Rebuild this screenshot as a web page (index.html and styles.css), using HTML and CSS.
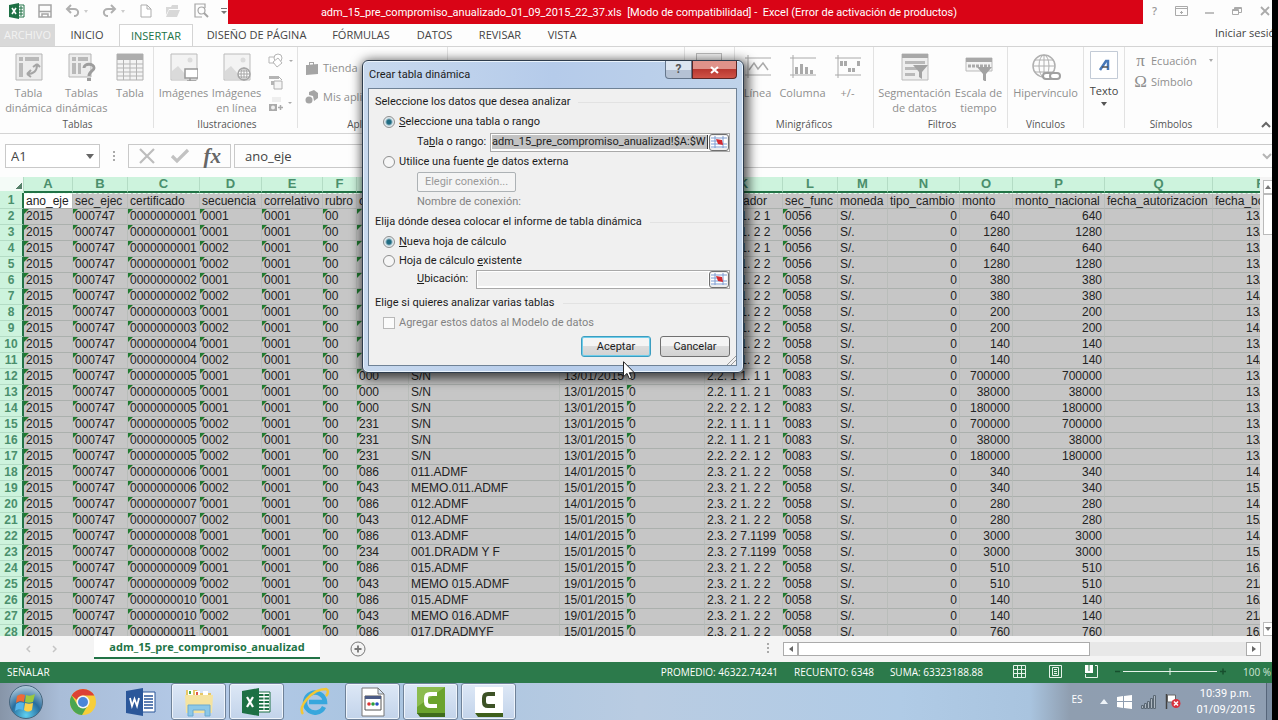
FILE: index.html
```html
<!DOCTYPE html>
<html lang="es">
<head>
<meta charset="utf-8">
<title>Excel - Crear tabla dinámica</title>
<link rel="stylesheet" href="styles.css">
</head>
<body>
<div class="screen">
  <header class="titlebar">
    <div class="quick">
      <svg class="q-xl" width="16" height="16" viewBox="0 0 16 16"><path d="M9 2h6v12H9z" fill="#fff" stroke="#217346"/><path d="M10 5h4M10 8h4M10 11h4M12 3v10" stroke="#217346"/><path d="M0 2l10-2v16L0 14z" fill="#1d7044"/><path d="M3 5l4 6M7 5l-4 6" stroke="#fff" stroke-width="1.6"/></svg>
      <svg class="q-save" width="14" height="14" viewBox="0 0 14 14" fill="none" stroke="#a5a5a5" stroke-width="1.5"><path d="M1 1h12v12H1zM1 7.500h12M4 13v-3h6v3"/></svg>
      <svg class="q-undo" width="24" height="14" viewBox="0 0 24 14"><path d="M2 5h7c6 0 5 7 0 7M6 1L2 5l4 4" fill="none" stroke="#b0b0b0" stroke-width="2"/><path d="M19 6h4l-2 3z" fill="#ccc"/></svg>
      <svg class="q-redo" width="24" height="14" viewBox="0 0 24 14"><path d="M13 5H6c-6 0-5 7 0 7M9 1l4 4-4 4" fill="none" stroke="#b0b0b0" stroke-width="2"/><path d="M19 6h4l-2 3z" fill="#ccc"/></svg>
      <svg class="q-new" width="12" height="14" viewBox="0 0 12 14" fill="#fff" stroke="#adadad"><path d="M1 1h6l4 4v8H1zM7 1v4h4"/></svg>
      <svg class="q-open" width="15" height="14" viewBox="0 0 15 14" fill="#d8d8d8"><path d="M1 3h5l1-2h6v4H4l-3 6zM4 6h11l-3 7H1z"/></svg>
      <svg class="q-view" width="15" height="15" viewBox="0 0 15 15" fill="none" stroke="#a5a5a5" stroke-width="1.2"><path d="M8 14H1V1h10v4"/><circle cx="7.500" cy="7.500" r="3.500"/><path d="M10 10l4 4" stroke-width="2"/></svg>
      <svg class="q-more" width="6" height="8" viewBox="0 0 6 8" fill="#777"><path d="M0 1h6v1H0zM0 4h6L3 7z"/></svg>
    </div>
    <h1 class="doc-title">adm_15_pre_compromiso_anualizado_01_09_2015_22_37.xls&nbsp; [Modo de compatibilidad] -&nbsp; Excel (Error de activación de productos)</h1>
    <div class="win-controls">
      <span>?</span>
      <svg width="13" height="10" viewBox="0 0 13 10" fill="none" stroke="#aaa"><path d="M.5.5h12v9H.5zM.5 2.500h12M5 6.500h3M6.500 5v3"/></svg>
      <svg width="10" height="10" viewBox="0 0 10 10" stroke="#aaa" stroke-width="1.500"><path d="M0 7h9"/></svg>
      <svg width="10" height="10" viewBox="0 0 10 10" fill="none" stroke="#aaa"><path d="M.5 3.500h6v5h-6zM2.500 3.500v-2h7v5h-3M1 4.500h5M3 2.500h6"/></svg>
      <svg width="10" height="10" viewBox="0 0 10 10" stroke="#aaa" stroke-width="1.800"><path d="M1 1l8 8M9 1L1 9"/></svg>
    </div>
  </header>

  <nav class="tabs">
    <button class="tab tab-file">ARCHIVO</button>
    <button class="tab t-home">INICIO</button>
    <button class="tab tab-active">INSERTAR</button>
    <button class="tab t-page">DISEÑO DE PÁGINA</button>
    <button class="tab t-form">FÓRMULAS</button>
    <button class="tab t-data">DATOS</button>
    <button class="tab t-rev">REVISAR</button>
    <button class="tab t-view">VISTA</button>
    <a class="sign-in" href="#">Iniciar sesión</a>
  </nav>

  <section class="ribbon">
    <div class="group g-tables">
      <div class="tools">
        <button class="tool w53"><svg width="28" height="28" viewBox="0 0 28 28"><path d="M1 1h26v26H1z" fill="#ececec" stroke="#b5b5b5"/><path d="M4 4h4v4H4zM10 4h14v4H10zM4 10h4v14H4z" fill="#b9b9b9"/><path d="M12 21c6 0 10-3 10-9M12 21l4-4M12 21l4 3M22 11l-4 3M22 11l3 3" fill="none" stroke="#a5a5a5" stroke-width="2"/></svg><span>Tabla<br>dinámica</span></button>
        <button class="tool w53"><svg width="28" height="28" viewBox="0 0 28 28"><path d="M1 1h22v23H1z" fill="#ececec" stroke="#b5b5b5"/><path d="M4 4h4v4H4zM10 4h10v4H10zM4 10h4v11H4zM10 10h3v11h-3z" fill="#b9b9b9"/><path d="M16 15c0-5 10-5 10 0 0 3-5 3-5 8" fill="none" stroke="#9d9d9d" stroke-width="3"/><path d="M19 25h4v3h-4z" fill="#9d9d9d"/></svg><span>Tablas<br>dinámicas</span></button>
        <button class="tool w44"><svg width="28" height="28" viewBox="0 0 28 28"><path d="M1 1h26v26H1z" fill="#f4f4f4" stroke="#b0b0b0"/><path d="M1 1h26v6H1z" fill="#adadad"/><path d="M1 11h26M1 15h26M1 19h26M1 23h26M7.500 7v20M14 7v20M20.500 7v20" stroke="#b5b5b5"/></svg><span>Tabla</span></button>
      </div>
      <h2>Tablas</h2>
    </div>
    <div class="group g-ill">
      <div class="tools">
        <button class="tool w53"><svg width="28" height="28" viewBox="0 0 28 28"><path d="M1 1h26v26H1z" fill="#f3f3f3" stroke="#bbb"/><path d="M2 26V18l6-5 8 9v4z" fill="#dadada"/><circle cx="20" cy="7" r="2.500" fill="#dcdcdc"/><path d="M15 16h13v9H15zM20 25v3M17 28h9" fill="#fff" stroke="#999" stroke-width="1.500"/></svg><span>Imágenes</span></button>
        <button class="tool w53"><svg width="28" height="28" viewBox="0 0 28 28"><path d="M1 1h26v26H1z" fill="#f3f3f3" stroke="#bbb"/><path d="M2 26V18l6-5 8 9v4z" fill="#dadada"/><circle cx="20" cy="7" r="2.500" fill="#dcdcdc"/><circle cx="21" cy="21" r="6" fill="#fff" stroke="#a5a5a5" stroke-width="1.500"/><path d="M21 15v12M15 21h12M16 18h10M16 24h10" stroke="#a5a5a5"/><ellipse cx="21" cy="21" rx="3" ry="6" fill="none" stroke="#a5a5a5"/></svg><span>Imágenes<br>en línea</span></button>
        <div class="small-icons">
          <svg width="26" height="15" viewBox="0 0 26 15" fill="#fff" stroke="#b5b5b5"><path d="M1 4h8v6H1z"/><circle cx="10" cy="5" r="4"/><path d="M10 5l4 5-5 4-4-5z"/><path d="M21 7h4l-2 2z" fill="#aaa" stroke="none"/></svg>
          <svg width="26" height="15" viewBox="0 0 26 15"><path d="M1 1h10v3H1zM3 6h3v4H3z" fill="#b5b5b5"/><path d="M6 6h8v8H6z" fill="#f5f5f5" stroke="#b0b0b0"/><path d="M11 2l3 3" stroke="#b0b0b0"/></svg>
          <svg width="26" height="15" viewBox="0 0 26 15"><path d="M4 0h9v5H4z" fill="#eee"/><path d="M1 7h8v7H1z" fill="#aaa"/><circle cx="5" cy="10.500" r="2" fill="#eee"/><path d="M10 10.500h5M12.500 8v5" stroke="#aaa" stroke-width="1.500"/><path d="M20 5h4l-2 2z" fill="#aaa"/></svg>
        </div>
      </div>
      <h2>Ilustraciones</h2>
    </div>
    <div class="group g-apps">
      <div class="line-tools">
        <button class="line-tool"><svg width="14" height="14" viewBox="0 0 14 14" fill="#a5a5a5"><path d="M1 4l12-1v10L1 14zM4 4V1h5v3H8V2H5v2z"/></svg>Tienda</button>
        <button class="line-tool"><svg width="14" height="14" viewBox="0 0 14 14" fill="#a5a5a5"><path d="M4 2l5-2 4 3v5l-4 3-1-5-4-1z"/><circle cx="4" cy="10" r="3.500"/></svg>Mis aplicaciones</button>
      </div>
      <h2>Aplicaciones</h2>
    </div>
    <div class="group g-charts"></div>
    <div class="group g-pivot"><span class="chart-box"></span></div>
    <div class="group g-spark">
      <div class="tools">
        <button class="tool w45"><svg width="28" height="28" viewBox="0 0 28 28" fill="none" stroke="#aaa"><path d="M1 5h26M1 22h26M4 2v23"/><path d="M5 17l5-7 4 6 5-6 5 7" stroke-width="1.500"/></svg><span>Línea</span></button>
        <button class="tool w45"><svg width="28" height="28" viewBox="0 0 28 28"><path d="M1 5h26M1 22h26M4 2v23" stroke="#aaa"/><path d="M6 14h3v7H6zM11 11h3v10h-3zM16 14h3v7h-3zM21 17h3v4h-3z" fill="#aaa"/></svg><span>Columna</span></button>
        <button class="tool w45"><svg width="28" height="28" viewBox="0 0 28 28"><path d="M1 5h26M1 22h26M4 2v23" stroke="#aaa"/><path d="M6 8h3v5H6zM10 8h3v5h-3zM14 15h3v4h-3zM18 15h3v4h-3zM23 8h3v5h-3z" fill="#aaa"/></svg><span>+/-</span></button>
      </div>
      <h2>Minigráficos</h2>
    </div>
    <div class="group g-filter">
      <div class="tools">
        <button class="tool w72"><svg width="28" height="28" viewBox="0 0 28 28"><path d="M1 1h26v26H1z" fill="#eee" stroke="#bbb"/><path d="M1 1h26v4H1z" fill="#a8a8a8"/><path d="M4 8h20v3H4zM4 14h12v3H4zM4 20h10v3H4z" fill="#b9b9b9"/><path d="M12 12h15l-6 7v7l-3-2v-5z" fill="#a3a3a3"/></svg><span>Segmentación<br>de datos</span></button>
        <button class="tool w53"><svg width="28" height="28" viewBox="0 0 28 28"><path d="M1 5h26v13H1z" fill="#f4f4f4" stroke="#bbb"/><path d="M1 5h26v4H1z" fill="#a8a8a8"/><path d="M3 13h22" stroke="#aaa" stroke-width="3" stroke-dasharray="3 1"/><path d="M12 14h15l-6 7v8l-3-2v-6z" fill="#a3a3a3"/></svg><span>Escala de<br>tiempo</span></button>
      </div>
      <h2>Filtros</h2>
    </div>
    <div class="group g-link">
      <div class="tools">
        <button class="tool w72"><svg width="30" height="28" viewBox="0 0 30 28" fill="none" stroke="#b0b0b0"><circle cx="13" cy="13" r="11" stroke-width="1.500"/><ellipse cx="13" cy="13" rx="5" ry="11"/><path d="M13 2v22M2 13h22M4 7h18M4 19h18"/><g stroke="#a0a0a0" stroke-width="2" fill="#fff"><rect x="12" y="20" width="10" height="6" rx="3"/><rect x="19" y="20" width="10" height="6" rx="3"/></g></svg><span>Hipervínculo</span></button>
      </div>
      <h2>Vínculos</h2>
    </div>
    <div class="group g-text">
      <button class="tool tool-on"><svg width="28" height="28" viewBox="0 0 28 28"><path d="M.5.5h27v27H.5z" fill="#fff" stroke="#c3cbd6"/><path d="M10 19l6-9h2v9" fill="none" stroke="#4677b8" stroke-width="2.500"/><path d="M12 16h6" stroke="#555" stroke-width="1.500"/></svg><span>Texto</span><svg width="6" height="4" viewBox="0 0 6 4"><path d="M0 0h6L3 4z" fill="#555"/></svg></button>
    </div>
    <div class="group g-sym">
      <div class="sym-tools">
        <button class="line-tool"><i class="glyph">π</i>Ecuación<svg class="drop" width="4" height="3" viewBox="0 0 4 3"><path d="M0 0h4L2 3z" fill="#aaa"/></svg></button>
        <button class="line-tool"><i class="glyph">Ω</i>Símbolo</button>
      </div>
      <h2>Símbolos</h2>
    </div>
    <svg class="collapse" width="10" height="8" viewBox="0 0 10 8" fill="none" stroke="#666" stroke-width="2"><path d="M1 6l4-4 4 4"/></svg>
  </section>

  <section class="formula-bar">
    <div class="name-box"><input type="text" value="A1" aria-label="Cuadro de nombres"><svg width="8" height="5" viewBox="0 0 8 5"><path d="M0 0h8L4 5z" fill="#666"/></svg></div>
    <span class="grip"></span>
    <div class="fx-box">
      <svg width="18" height="16" viewBox="0 0 18 16" stroke="#bdbdbd" stroke-width="2.200"><path d="M2 1l14 14M16 1L2 15"/></svg>
      <svg width="20" height="16" viewBox="0 0 20 16" fill="none" stroke="#c2c2c2" stroke-width="3.200"><path d="M2 8l5 5L18 2"/></svg>
      <i class="fx">fx</i>
    </div>
    <div class="formula"><input type="text" value="ano_eje" aria-label="Barra de fórmulas"><svg width="10" height="7" viewBox="0 0 10 7" fill="none" stroke="#b5b5b5" stroke-width="2"><path d="M1 1l4 4 4-4"/></svg></div>
  </section>

  <main class="sheet">
    <div class="grid-view">
      <table class="cells">
        <colgroup><col class="c-hd"><col class="c-a"><col class="c-b"><col class="c-c"><col class="c-d"><col class="c-e"><col class="c-f"><col class="c-g"><col class="c-h"><col class="c-i"><col class="c-j"><col class="c-k"><col class="c-l"><col class="c-m"><col class="c-n"><col class="c-o"><col class="c-p"><col class="c-q"><col class="c-r"></colgroup>
        <thead id="letters"></thead>
        <tbody id="rows"></tbody>
      </table>
    </div>
    <div class="v-scroll">
      <button class="v-btn" aria-label="Subir"><svg width="6" height="4" viewBox="0 0 6 4"><path d="M0 4h6L3 0z" fill="#777"/></svg></button>
      <div class="v-thumb"></div>
      <button class="v-btn v-down" aria-label="Bajar"><svg width="6" height="4" viewBox="0 0 6 4"><path d="M0 0h6L3 4z" fill="#777"/></svg></button>
    </div>
  </main>

  <section class="sheet-tabs">
    <div class="nav-arrows"><svg width="5" height="8" viewBox="0 0 5 8"><path d="M4 1L1 4l3 3" fill="none" stroke="#c5c5c5" stroke-width="1.500"/></svg><svg width="5" height="8" viewBox="0 0 5 8"><path d="M1 1l3 3-3 3" fill="none" stroke="#c5c5c5" stroke-width="1.500"/></svg></div>
    <button class="sheet-tab">adm_15_pre_compromiso_anualizad</button>
    <button class="add-sheet" aria-label="Hoja nueva"><svg width="16" height="16" viewBox="0 0 16 16" fill="none" stroke="#777"><circle cx="8" cy="8" r="7"/><path d="M8 4.500v7M4.500 8h7" stroke-width="1.800"/></svg></button>
    <span class="grip tab-grip"></span>
    <div class="h-scroll">
      <button class="h-btn" aria-label="Izquierda"><svg width="4" height="6" viewBox="0 0 4 6"><path d="M4 0v6L0 3z" fill="#666"/></svg></button>
      <div class="h-thumb"></div>
      <button class="h-btn h-right" aria-label="Derecha"><svg width="4" height="6" viewBox="0 0 4 6"><path d="M0 0v6l4-3z" fill="#666"/></svg></button>
    </div>
  </section>

  <footer class="status">
    <span class="mode">SEÑALAR</span>
    <span>PROMEDIO: 46322.74241</span>
    <span>RECUENTO: 6348</span>
    <span>SUMA: 63323188.88</span>
    <div class="views">
      <svg width="13" height="13" viewBox="0 0 13 13" fill="none" stroke="#e6f3ea"><path d="M.5.5h12v12H.5zM.5 4.500h12M.5 8.500h12M4.500.5v12M8.500.5v12"/></svg>
      <svg width="13" height="13" viewBox="0 0 13 13" fill="none" stroke="#e6f3ea"><path d="M.5.5h12v12H.5zM3.500 2.500h6v8h-6zM5 4.500h3M5 6.500h3M5 8.500h3"/></svg>
      <svg width="13" height="13" viewBox="0 0 13 13"><path d="M0 0h8v8H0z" fill="#fff"/><path d="M4 0v6" stroke="#2c7a4b"/><path d="M10 .5h2.500v12H.5V9" fill="none" stroke="#e6f3ea"/></svg>
    </div>
    <svg class="zoom" width="112" height="9" viewBox="0 0 112 9"><path d="M0 4.500h5M105 4.500h6M108 1.500v6" stroke="#174f2e" stroke-width="1.500"/><path d="M8 4.500h94M55 1v7" stroke="#e6f3ea"/></svg>
    <span class="pct">100 %</span>
  </footer>

  <footer class="taskbar">
    <button class="task start" aria-label="Inicio"><svg width="36" height="36" viewBox="0 0 36 36"><defs><radialGradient id="orb" cx=".5" cy=".9" r=".9"><stop offset="0" stop-color="#5fd0f0"/><stop offset=".5" stop-color="#276d9e"/><stop offset="1" stop-color="#b8cede"/></radialGradient></defs><circle cx="18" cy="18" r="16.500" fill="url(#orb)" stroke="#47667e"/><path d="M9 12c3-2 5-2 8-1l-1 7c-3-1-5-1-8 1z" fill="#ee6a35"/><path d="M18 11c3 1 5 1 9-1l-2 8c-3 1-5 1-8 0z" fill="#9bc93f"/><path d="M8 20c3-2 5-2 8-1l-1 7c-3-1-5-1-8 1z" fill="#56b4ea"/><path d="M17 19c3 1 5 1 8 0l-1 7c-3 2-5 2-8 0z" fill="#fbd04a"/></svg></button>
    <button class="task" aria-label="Chrome"><svg width="28" height="28" viewBox="0 0 28 28"><circle cx="14" cy="14" r="13" fill="#f6ce3a"/><path d="M2.700 7.500A13 13 0 0 1 25.300 7.500H14a6.500 6.500 0 0 0-6 4.500z" fill="#dc4136"/><path d="M2.700 7.500A13 13 0 0 0 13 27l5-8.500a6.500 6.500 0 0 1-9.500-1.500z" fill="#4ba551"/><circle cx="14" cy="14" r="6.500" fill="#f7f7f7"/><circle cx="14" cy="14" r="5" fill="#4a86d8"/></svg></button>
    <button class="task" aria-label="Word"><svg width="30" height="28" viewBox="0 0 30 28"><path d="M15 4h14v20H15z" fill="#fff" stroke="#2b579a"/><path d="M18 8h9M18 11h9M18 14h9M18 17h9M18 20h9" stroke="#2b579a" stroke-width="1.500"/><path d="M0 3l17-3v28L0 25z" fill="#2b579a"/><path d="M4 10l2 8 2.500-7 2.500 7 2-8" fill="none" stroke="#fff" stroke-width="1.800"/></svg></button>
    <button class="task open" aria-label="Explorador"><svg width="32" height="30" viewBox="0 0 32 30"><path d="M3 3h11l2 3h12v20H3z" fill="#e6c765"/><path d="M5 3h5v5H5zM12 4h5v5h-5zM20 4h5v5h-5z" fill="#fff"/><path d="M6 4h2v3H6z" fill="#4caf50"/><path d="M13 5h2v3h-2z" fill="#e05b4b"/><path d="M2 8h28l-1 18H3z" fill="#f5e3a0"/><path d="M5 29V18h22v11h-5v-6H10v6z" fill="#8cc8e8" stroke="#6aa9d0"/></svg></button>
    <button class="task open" aria-label="Excel"><svg width="30" height="28" viewBox="0 0 30 28"><path d="M15 4h13v20H15z" fill="#fff" stroke="#1d7044"/><path d="M17 7h10M17 10.500h10M17 14h10M17 17.500h10M17 21h10" stroke="#1d7044" stroke-width="2"/><path d="M22 5v18" stroke="#fff"/><path d="M0 3l17-3v28L0 25z" fill="#1d7044"/><path d="M5 9l6 10M11 9L5 19" stroke="#fff" stroke-width="2.200"/></svg></button>
    <button class="task" aria-label="Internet Explorer"><svg width="30" height="30" viewBox="0 0 30 30"><path d="M24 20a10 10 0 1 1 1-5H9" fill="none" stroke="#37a7dd" stroke-width="4.500"/><path d="M3 27C-3 20 12 2 26 2c3 1 2 5 0 7" fill="none" stroke="#f3c736" stroke-width="2.500"/></svg></button>
    <button class="task open" aria-label="Aplicación"><svg width="24" height="30" viewBox="0 0 24 30"><path d="M1 1h16l6 6v22H1zM17 1v6h6" fill="#fff" stroke="#777"/><path d="M4 9h16v14H4z" fill="#fff" stroke="#555"/><path d="M4 9h16v3H4z" fill="#4a5a86"/><circle cx="8" cy="17" r="1.800" fill="#d33"/><circle cx="12" cy="17" r="1.800" fill="#2a9d3a"/><circle cx="16" cy="17" r="1.800" fill="#274fc2"/></svg></button>
    <button class="task open" aria-label="Camtasia"><svg width="30" height="30" viewBox="0 0 30 30"><path d="M1 0h28v27H1z" fill="#6ba32e"/><path d="M1 0h28L1 20z" fill="#8cbc4f"/><path d="M1 26h28v4H4z" fill="#3f6b1c"/><path d="M21 7h-7q-4 0-4 4v4q0 4 4 4h7" fill="none" stroke="#fff" stroke-width="4"/></svg></button>
    <button class="task open" aria-label="Camtasia Recorder"><svg width="30" height="30" viewBox="0 0 30 30"><path d="M1 0h28v27H1z" fill="#fff"/><path d="M1 26h28v4H4z" fill="#3f5f1c"/><path d="M21 7h-7q-4 0-4 4v4q0 4 4 4h7" fill="none" stroke="#3d5226" stroke-width="4"/></svg></button>
    <div class="tray">
      <span class="lang">ES</span>
      <svg width="8" height="5" viewBox="0 0 8 5"><path d="M0 5h8L4 0z" fill="#eef3f8"/></svg>
      <svg width="15" height="14" viewBox="0 0 15 14" fill="#fff"><path d="M0 2l6-1v5H0zM7 1l8-1v6H7zM0 7h6v6l-6-1zM7 7h8v7l-8-1z"/></svg>
      <svg width="15" height="14" viewBox="0 0 15 14" fill="#aeb8c2" stroke="#5b6874"><path d="M.5 10.500h2v3h-2zM3.500 8.500h2v5h-2zM6.500 6.500h2v7h-2zM9.500 3.500h2v10h-2zM12.500.5h2v13h-2z"/></svg>
      <svg width="16" height="15" viewBox="0 0 16 15"><path d="M1.500 0v15" stroke="#444" stroke-width="1.500"/><path d="M2.500 1h8v7h-8z" fill="#fff" stroke="#666"/><circle cx="11" cy="9.500" r="4.500" fill="#d8313d"/><path d="M9 7.500l4 4M13 7.500l-4 4" stroke="#fff" stroke-width="1.500"/></svg>
      <span class="clock">10:39 p.m.<br>01/09/2015</span>
    </div>
    <span class="peek"></span>
  </footer>
</div>

<div class="dialog" role="dialog" aria-labelledby="dlg-title">
  <div class="dlg-head">
    <span class="dlg-title" id="dlg-title">Crear tabla dinámica</span>
    <div class="dlg-ctl"><button class="dlg-help">?</button><button class="dlg-close" aria-label="Cerrar"><svg width="9" height="8" viewBox="0 0 9 8"><path d="M1 1l7 6M8 1L1 7" stroke="#fff" stroke-width="2.200"/></svg></button></div>
  </div>
  <form class="dlg-body">
    <div class="legend"><span>Seleccione los datos que desea analizar</span></div>
    <div class="opt"><input type="radio" name="src" id="r1" checked><label for="r1"><u>S</u>eleccione una tabla o rango</label></div>
    <div class="sub"><label for="rng">Ta<u>b</u>la o rango:</label><div class="ref ref-range"><input type="text" id="rng" class="marked" value="adm_15_pre_compromiso_anualizad!$A:$W"><button type="button" class="pick" aria-label="Elegir rango"><svg width="16" height="12" viewBox="0 0 16 12"><path d="M0 0h16v12H0z" fill="#fff"/><path d="M0 2h16M0 5h6M0 8h16M0 11h16M4 0v12M12 0v12" stroke="#7d9bd0"/><path d="M5 3l6 1 1 5-5-1z" fill="#d5282e"/></svg></button></div></div>
    <div class="opt"><input type="radio" name="src" id="r2"><label for="r2">Utilice una fuente <u>d</u>e datos externa</label></div>
    <div class="sub"><button type="button" class="choose" disabled>Elegir conexión...</button></div>
    <div class="sub muted">Nombre de conexión:</div>
    <div class="legend"><span>Elija dónde desea colocar el informe de tabla dinámica</span></div>
    <div class="opt"><input type="radio" name="dst" id="r3" checked><label for="r3"><u>N</u>ueva hoja de cálculo</label></div>
    <div class="opt opt-tight"><input type="radio" name="dst" id="r4"><label for="r4">Hoja de cálculo <u>e</u>xistente</label></div>
    <div class="sub"><label for="loc"><u>U</u>bicación:</label><div class="ref ref-loc"><input type="text" id="loc" class="blank" value=""><button type="button" class="pick" aria-label="Elegir ubicación"><svg width="16" height="12" viewBox="0 0 16 12"><path d="M0 0h16v12H0z" fill="#fff"/><path d="M0 2h16M0 5h6M0 8h16M0 11h16M4 0v12M12 0v12" stroke="#7d9bd0"/><path d="M5 3l6 1 1 5-5-1z" fill="#d5282e"/></svg></button></div></div>
    <div class="legend legend-last"><span>Elige si quieres analizar varias tablas</span></div>
    <div class="opt muted"><input type="checkbox" id="k1" disabled><label for="k1">Agregar estos datos al Modelo de datos</label></div>
    <div class="actions"><button type="button" class="btn btn-ok">Aceptar</button><button type="button" class="btn">Cancelar</button></div>
    <svg class="resize" width="9" height="9" viewBox="0 0 9 9"><path d="M0 9L9 0M4 9l5-5" stroke="#9a9a9a"/></svg>
  </form>
</div>
<svg class="pointer" width="12" height="19" viewBox="0 0 12 19"><path d="M.5.7v15l3.500-3.300 2.300 5.300 2.300-1-2.300-5h5z" fill="#fff" stroke="#222"/></svg>
<script src="script.js"></script>
</body>
</html>
```
FILE: styles.css
```css
* { box-sizing: border-box; }
body { margin: 0; padding-right: 6px; background: #000; font: 11px/16px "Open Sans", "Noto Sans", sans-serif; color: #444; overflow: hidden; }
button, input { font: inherit; color: inherit; }
button { border: 0; background: none; padding: 0; }
svg { flex: none; display: block; }
.screen { height: 100vh; display: flex; flex-direction: column; background: #fdfdfd; overflow: hidden; }

.titlebar { display: flex; height: 24px; flex: none; }
.quick { width: 228px; flex: none; display: flex; align-items: center; padding: 0 3px 3px 9px; }
.q-save { margin-left: 13px; }
.q-undo { margin-left: 13px; }
.q-redo { margin-left: 13px; }
.q-new { margin-left: 14px; }
.q-open { margin-left: 13px; }
.q-view { margin-left: 14px; }
.q-more { margin-left: 12px; }
.doc-title { flex: 1; margin: 0; padding: 1px 93px 0 0; background: #d90416; color: #fff; font: 11px/23px Roboto, "Open Sans", sans-serif; text-align: center; white-space: nowrap; overflow: hidden; }
.win-controls { width: 129px; flex: none; display: flex; align-items: center; justify-content: space-between; padding: 0 2px 3px 9px; color: #999; font-weight: 600; }

.tabs { display: flex; height: 23px; flex: none; border-bottom: 1px solid #d4d4d4; overflow: hidden; white-space: nowrap; }
.tab { flex: none; height: 22px; color: #444; text-align: center; }
.tab-file { width: 55px; background: #d9d9d9; color: #f2f2f2; }
.t-home { width: 64px; }
.tab-active { width: 74px; height: 23px; border: 1px solid #d4d4d4; border-bottom: 0; background: #fff; color: #217346; }
.t-page { width: 127px; }
.t-form { width: 82px; }
.t-data { width: 65px; }
.t-rev { width: 66px; }
.t-view { width: 58px; }
.sign-in { margin-left: auto; width: 57px; flex: none; line-height: 17px; color: #444; text-decoration: none; overflow: hidden; }

.ribbon { display: flex; height: 87px; flex: none; border-bottom: 1px solid #d4d4d4; position: relative; overflow: hidden; }
.group { flex: none; display: flex; flex-direction: column; justify-content: space-between; padding: 6px 0 0; position: relative; border-right: 1px solid #e2e2e2; margin-bottom: 5px; color: #8f8f8f; }
.group h2 { margin: 0; height: 8px; text-align: center; font-size: 10px; line-height: 9px; font-weight: 400; color: #555; }
.g-tables { width: 154px; padding-left: 2px; }
.g-ill { width: 144px; padding-left: 3px; }
.g-apps { width: 150px; padding-left: 7px; }
.g-charts { flex: 1; }
.g-pivot { width: 50px; }
.g-spark { width: 139px; }
.g-filter { width: 134px; padding-left: 3px; }
.g-link { width: 76px; }
.g-text { width: 41px; }
.g-sym { width: 93px; margin-right: 54px; }
.chart-box { width: 26px; height: 26px; margin-left: 11px; border: 1px solid #bbb; background: #f4f4f4; }
.tools { display: flex; }
.tool { display: flex; flex-direction: column; align-items: center; gap: 4px; line-height: 15px; white-space: nowrap; }
.tool span { display: block; text-align: center; }
.w53 { width: 53px; }
.w44 { width: 44px; }
.w45 { width: 45px; }
.w72 { width: 75px; }
.tool-on { width: 40px; margin-top: -2px; color: #444; }
.small-icons { display: flex; flex-direction: column; gap: 7px; padding-left: 5px; }
.line-tools { display: flex; flex-direction: column; gap: 14px; padding-top: 7px; }
.sym-tools { display: flex; flex-direction: column; gap: 6px; padding-left: 9px; }
.line-tool { display: flex; align-items: center; gap: 4px; height: 15px; white-space: nowrap; }
.glyph { font: 17px/15px "Liberation Serif", serif; width: 13px; }
.drop { margin-left: 8px; }
.collapse { position: absolute; right: 1px; bottom: 4px; }

.formula-bar { display: flex; flex: none; padding: 10px 0 9px 5px; height: 43px; }
.name-box { width: 95px; height: 24px; border: 1px solid #c9c9c9; display: flex; align-items: center; padding: 0 5px; flex: none; background: #fff; }
.name-box input, .formula input { border: 0; outline: 0; background: none; flex: 1; min-width: 0; padding: 0; font-size: 13px; color: #444; }
.grip { width: 2px; height: 11px; margin: 7px 13px 0; background: repeating-linear-gradient(#aaa 0 2px, transparent 2px 4px); flex: none; }
.fx-box { width: 103px; height: 24px; border: 1px solid #c9c9c9; display: flex; align-items: center; justify-content: space-between; padding: 0 9px; flex: none; }
.fx { font: italic bold 21px/20px "Liberation Serif", serif; color: #666; }
.formula { flex: 1; height: 24px; margin-left: 3px; border: 1px solid #c9c9c9; border-right: 0; display: flex; align-items: center; padding: 0 0 0 10px; }

.sheet { flex: 1; display: flex; min-height: 0; background: #f4f4f4; }
.grid-view { flex: 1; min-width: 0; overflow: hidden; background: #c6c6c6; }
.cells { border-collapse: separate; border-spacing: 0; table-layout: fixed; width: 1310px; font: 12px/15px "Liberation Sans", Arial, sans-serif; color: #222; }
.c-hd { width: 24px; } .c-a { width: 49px; } .c-b { width: 55px; } .c-c { width: 72px; } .c-d { width: 62px; } .c-e { width: 61px; } .c-f { width: 34px; } .c-g { width: 52px; } .c-h { width: 151px; } .c-i { width: 67px; } .c-j { width: 78px; } .c-k { width: 78px; } .c-l { width: 55px; } .c-m { width: 50px; } .c-n { width: 72px; } .c-o { width: 53px; } .c-p { width: 92px; } .c-q { width: 108px; } .c-r { width: 97px; }
.cells th, .cells td { height: 16px; padding: 0 2px; white-space: nowrap; overflow: hidden; }
.cells thead th { height: 16px; padding: 0; background: #cdf3dd; color: #4a8f6c; font-size: 13px; line-height: 14px; font-weight: 700; border-right: 1px solid #b4dcc5; border-bottom: 2px solid #217346; }
.cells thead th:first-child { background: linear-gradient(135deg, transparent 60%, #56806a 60%) 13px 4px / 9px 8px no-repeat #f4fbf7; border-bottom-color: #cdf3dd; }
.cells tbody th { padding: 0; background: #cdf3dd; color: #4a8f6c; font-weight: 700; border-bottom: 1px solid #b4dcc5; border-right: 2px solid #217346; }
.cells td { border-right: 1px solid #b9bdba; border-bottom: 1px solid #abb0ad; text-align: left; }
.cells td.num { text-align: right; }
.cells td.err { background: linear-gradient(135deg, #1f7a2f 3px, transparent 4px); }
.cells td.active { background: #fff; }
.cells tr.first td { border-top: 1px dashed #e9fff1; line-height: 14px; }
.cells td.cut { padding-left: 33px; }

.v-scroll { width: 12px; flex: none; display: flex; flex-direction: column; align-items: flex-end; padding-top: 3px; overflow: hidden; }
.v-btn { width: 9px; height: 14px; border: 1px solid #bbb; border-right: 0; background: #fff; flex: none; display: flex; align-items: center; justify-content: center; }
.v-thumb { width: 9px; height: 41px; border: 1px solid #bbb; border-right: 0; background: #fff; }
.v-down { margin-top: auto; }

.sheet-tabs { height: 26px; flex: none; display: flex; background: #f4f4f4; }
.nav-arrows { width: 94px; flex: none; display: flex; gap: 21px; padding: 9px 0 0 26px; }
.sheet-tab { width: 226px; height: 23px; background: #fff; border-bottom: 2px solid #217346; color: #217346; font-weight: 700; flex: none; }
.add-sheet { margin: 0 auto 0 30px; height: 25px; }
.tab-grip { margin: 7px 14px 0 0; }
.h-scroll { width: 478px; height: 14px; margin: 6px 11px 0 0; display: flex; background: #e8e8e8; }
.h-btn { width: 15px; border: 1px solid #ababab; background: #fff; display: flex; align-items: center; justify-content: center; flex: none; }
.h-thumb { width: 292px; border: 1px solid #ababab; background: #fff; }
.h-right { margin-left: auto; }

.status { height: 21px; flex: none; display: flex; align-items: center; gap: 16px; padding: 0 2px 2px 7px; background: #2c7a4b; color: #fff; font-size: 10px; white-space: nowrap; }
.mode { margin-right: auto; }
.views { display: flex; gap: 23px; margin: 0 1px 0 14px; }
.pct { color: #cfe6d7; width: 27px; }

.taskbar { height: 37px; flex: none; display: flex; gap: 3px; background: linear-gradient(90deg, #8795a8 0, #a9bdd8 60px, #b4cae8 200px, #a9c4e0 380px, #b9cce2 640px, #b0cbe6 900px, #a9c4df 1030px, #8f9eb0 1070px, #8f9eb2 100%); }
.task { width: 55px; height: 37px; display: flex; align-items: center; justify-content: center; flex: none; }
.start { width: 52px; }
.open { background: linear-gradient(#dde8f6, #c2d3ea); border: 1px solid #6f8299; border-radius: 3px; box-shadow: inset 0 0 0 1px #eef4fb; }
.tray { margin-left: auto; display: flex; align-items: center; gap: 9px; padding-right: 8px; color: #fff; }
.lang { margin: 0 9px 5px 0; font-size: 10px; }
.clock { font: 11px/16px Roboto, "Open Sans", sans-serif; text-align: center; margin-left: 6px; }
.peek { width: 6px; flex: none; background: #7d8ea3; border-left: 1px solid #56657a; }

.dialog { position: absolute; left: 362px; top: 60px; width: 382px; padding: 0 6px 6px 5px; border: 1px solid #2e3c4c; border-radius: 6px; background: linear-gradient(90deg, #c8d9ee, #b5cbea 50%, #bfd3ea); box-shadow: inset 0 0 0 1px #eaf3fc, 2px 3px 11px 3px rgba(0, 0, 0, .65); color: #1c1c1c; font: 11px/16px Roboto, "Open Sans", sans-serif; }
.dlg-head { display: flex; height: 27px; justify-content: space-between; }
.dlg-title { line-height: 28px; padding-left: 1px; }
.dlg-ctl { display: flex; height: 18px; }
.dlg-help { width: 27px; border: 1px solid #66778c; border-top: 0; border-radius: 0 0 0 4px; background: linear-gradient(#dce5f0 50%, #b5c2d4 50%); color: #555; font-weight: 700; line-height: 15px; font-size: 12px; }
.dlg-close { width: 45px; border: 1px solid #5b2626; border-top: 0; border-radius: 0 0 4px 0; background: linear-gradient(#e0928a 45%, #b93831 50%, #cf5347); display: flex; align-items: center; justify-content: center; }
.dlg-body { position: relative; background: #f0f0f0; border: 1px solid #6f8296; padding: 3px 6px 8px; white-space: nowrap; }
.legend { display: flex; align-items: center; gap: 8px; height: 20px; }
.legend::after { content: ""; flex: 1; border-top: 1px solid #e2e2e2; }
.legend-last { height: 24px; padding-top: 4px; }
.opt { display: flex; align-items: center; height: 20px; padding-left: 8px; gap: 4px; }
.opt-tight { height: 17px; }
.opt input { appearance: none; width: 12px; height: 12px; margin: 0; border: 1px solid #8e8f8f; background: #f6f6f6; flex: none; }
.opt input[type=radio] { border-radius: 50%; }
.opt input[type=radio]:checked { background: radial-gradient(circle, #1f6b82 0 2px, #dfe9ee 4px); }
.opt input[type=checkbox] { border-color: #b9b9b9; background: #fbfbfb; }
.sub { display: flex; align-items: center; justify-content: space-between; height: 20px; padding-left: 42px; }
.muted { color: #838383; }
.ref { display: flex; align-items: center; height: 19px; border: 1px solid #a9a9a9; background: #fff; }
.ref-range { width: 240px; }
.ref-loc { width: 254px; }
.ref input { flex: 1; min-width: 0; border: 0; outline: 0; padding: 0; height: 14px; margin: 0 1px; }
.ref input.marked { background: #c3c3c3; border-right: 1px solid #333; }
.ref input.blank { background: #f0f0f0; }
.pick { width: 20px; height: 17px; border: 1px solid #707070; border-radius: 3px; background: #eee; display: flex; align-items: center; justify-content: center; }
.choose { width: 99px; height: 20px; border: 1px solid #adb2b5; border-radius: 2px; background: #f4f4f4; color: #9a9a9a; }
.actions { display: flex; justify-content: flex-end; gap: 9px; margin-top: 3px; }
.btn { width: 70px; height: 21px; border: 1px solid #707070; border-radius: 3px; background: linear-gradient(#f4f4f4 50%, #dcdcdc 50%, #d2d2d2); }
.btn-ok { border-color: #3c9dc0; box-shadow: inset 0 0 0 1px #6fcdea; }
.resize { position: absolute; right: 0; bottom: 0; }
.pointer { position: absolute; left: 623px; top: 361px; }
```
FILE: script.js
```javascript
const letters = ["", "A", "B", "C", "D", "E", "F", "G", "H", "I", "J", "K", "L", "M", "N", "O", "P", "Q", "R"];
const titles = ["ano_eje", "sec_ejec", "certificado", "secuencia", "correlativo", "rubro", "c", "", "", "", "clasificador", "sec_func", "moneda", "tipo_cambio", "monto", "monto_nacional", "fecha_autorizacion", "fecha_bo"];

// certificado | secuencia | G | H | I | clasificador | sec_func | monto | day
const data = `
1|0001||||2.3. 2 1. 2 1|0056|640|13
1|0001||||2.3. 2 1. 2 2|0056|1280|13
1|0002||||2.3. 2 1. 2 1|0056|640|13
1|0002||||2.3. 2 1. 2 2|0056|1280|13
2|0001||||2.3. 2 1. 2 2|0058|380|13
2|0002||||2.3. 2 1. 2 2|0058|380|14
3|0001||||2.3. 2 1. 2 2|0058|200|13
3|0002||||2.3. 2 1. 2 2|0058|200|14
4|0001||||2.3. 2 1. 2 2|0058|140|13
4|0002||||2.3. 2 1. 2 2|0058|140|14
5|0001|000|S/N|13/01/2015|2.2. 1 1. 1 1|0083|700000|13
5|0001|000|S/N|13/01/2015|2.2. 1 1. 2 1|0083|38000|13
5|0001|000|S/N|13/01/2015|2.2. 2 2. 1 2|0083|180000|13
5|0002|231|S/N|13/01/2015|2.2. 1 1. 1 1|0083|700000|13
5|0002|231|S/N|13/01/2015|2.2. 1 1. 2 1|0083|38000|13
5|0002|231|S/N|13/01/2015|2.2. 2 2. 1 2|0083|180000|13
6|0001|086|011.ADMF|14/01/2015|2.3. 2 1. 2 2|0058|340|14
6|0002|043|MEMO.011.ADMF|15/01/2015|2.3. 2 1. 2 2|0058|340|15
7|0001|086|012.ADMF|14/01/2015|2.3. 2 1. 2 2|0058|280|14
7|0002|043|012.ADMF|15/01/2015|2.3. 2 1. 2 2|0058|280|15
8|0001|086|013.ADMF|14/01/2015|2.3. 2 7.1199|0058|3000|14
8|0002|234|001.DRADM Y F|15/01/2015|2.3. 2 7.1199|0058|3000|15
9|0001|086|015.ADMF|15/01/2015|2.3. 2 1. 2 2|0058|510|16
9|0002|043|MEMO 015.ADMF|19/01/2015|2.3. 2 1. 2 2|0058|510|21
10|0001|086|015.ADMF|15/01/2015|2.3. 2 1. 2 2|0058|140|16
10|0002|043|MEMO 016.ADMF|19/01/2015|2.3. 2 1. 2 2|0058|140|21
11|0001|086|017.DRADMYF|15/01/2015|2.3. 2 1. 2 2|0058|760|16`.trim().split("\n");

const cell = (text, cls) => `<td${cls ? ` class="${cls}"` : ""}>${text}</td>`;

document.getElementById("letters").innerHTML =
  "<tr>" + letters.map(l => `<th>${l}</th>`).join("") + "</tr>";

let html = '<tr class="first"><th>1</th>' + titles.map((t, i) => cell(t, i ? "" : "active")).join("") + "</tr>";
data.forEach((line, i) => {
  const [cert, sec, g, h, date, clas, func, amount, day] = line.split("|");
  html += `<tr><th>${i + 2}</th>` +
    cell("2015", "err") + cell("000747", "err") + cell(cert.padStart(10, "0"), "err") +
    cell(sec, "err") + cell("0001", "err") + cell("00", "err") + cell(g, "err") +
    cell(h) + cell(date, "num") + cell(date ? "0" : "", "err") + cell(clas) +
    cell(func, "err") + cell("S/.") + cell("0", "num") + cell(amount, "num") +
    cell(amount, "num") + cell("") + cell(day + "/", "cut") + "</tr>";
});
document.getElementById("rows").innerHTML = html;
```
